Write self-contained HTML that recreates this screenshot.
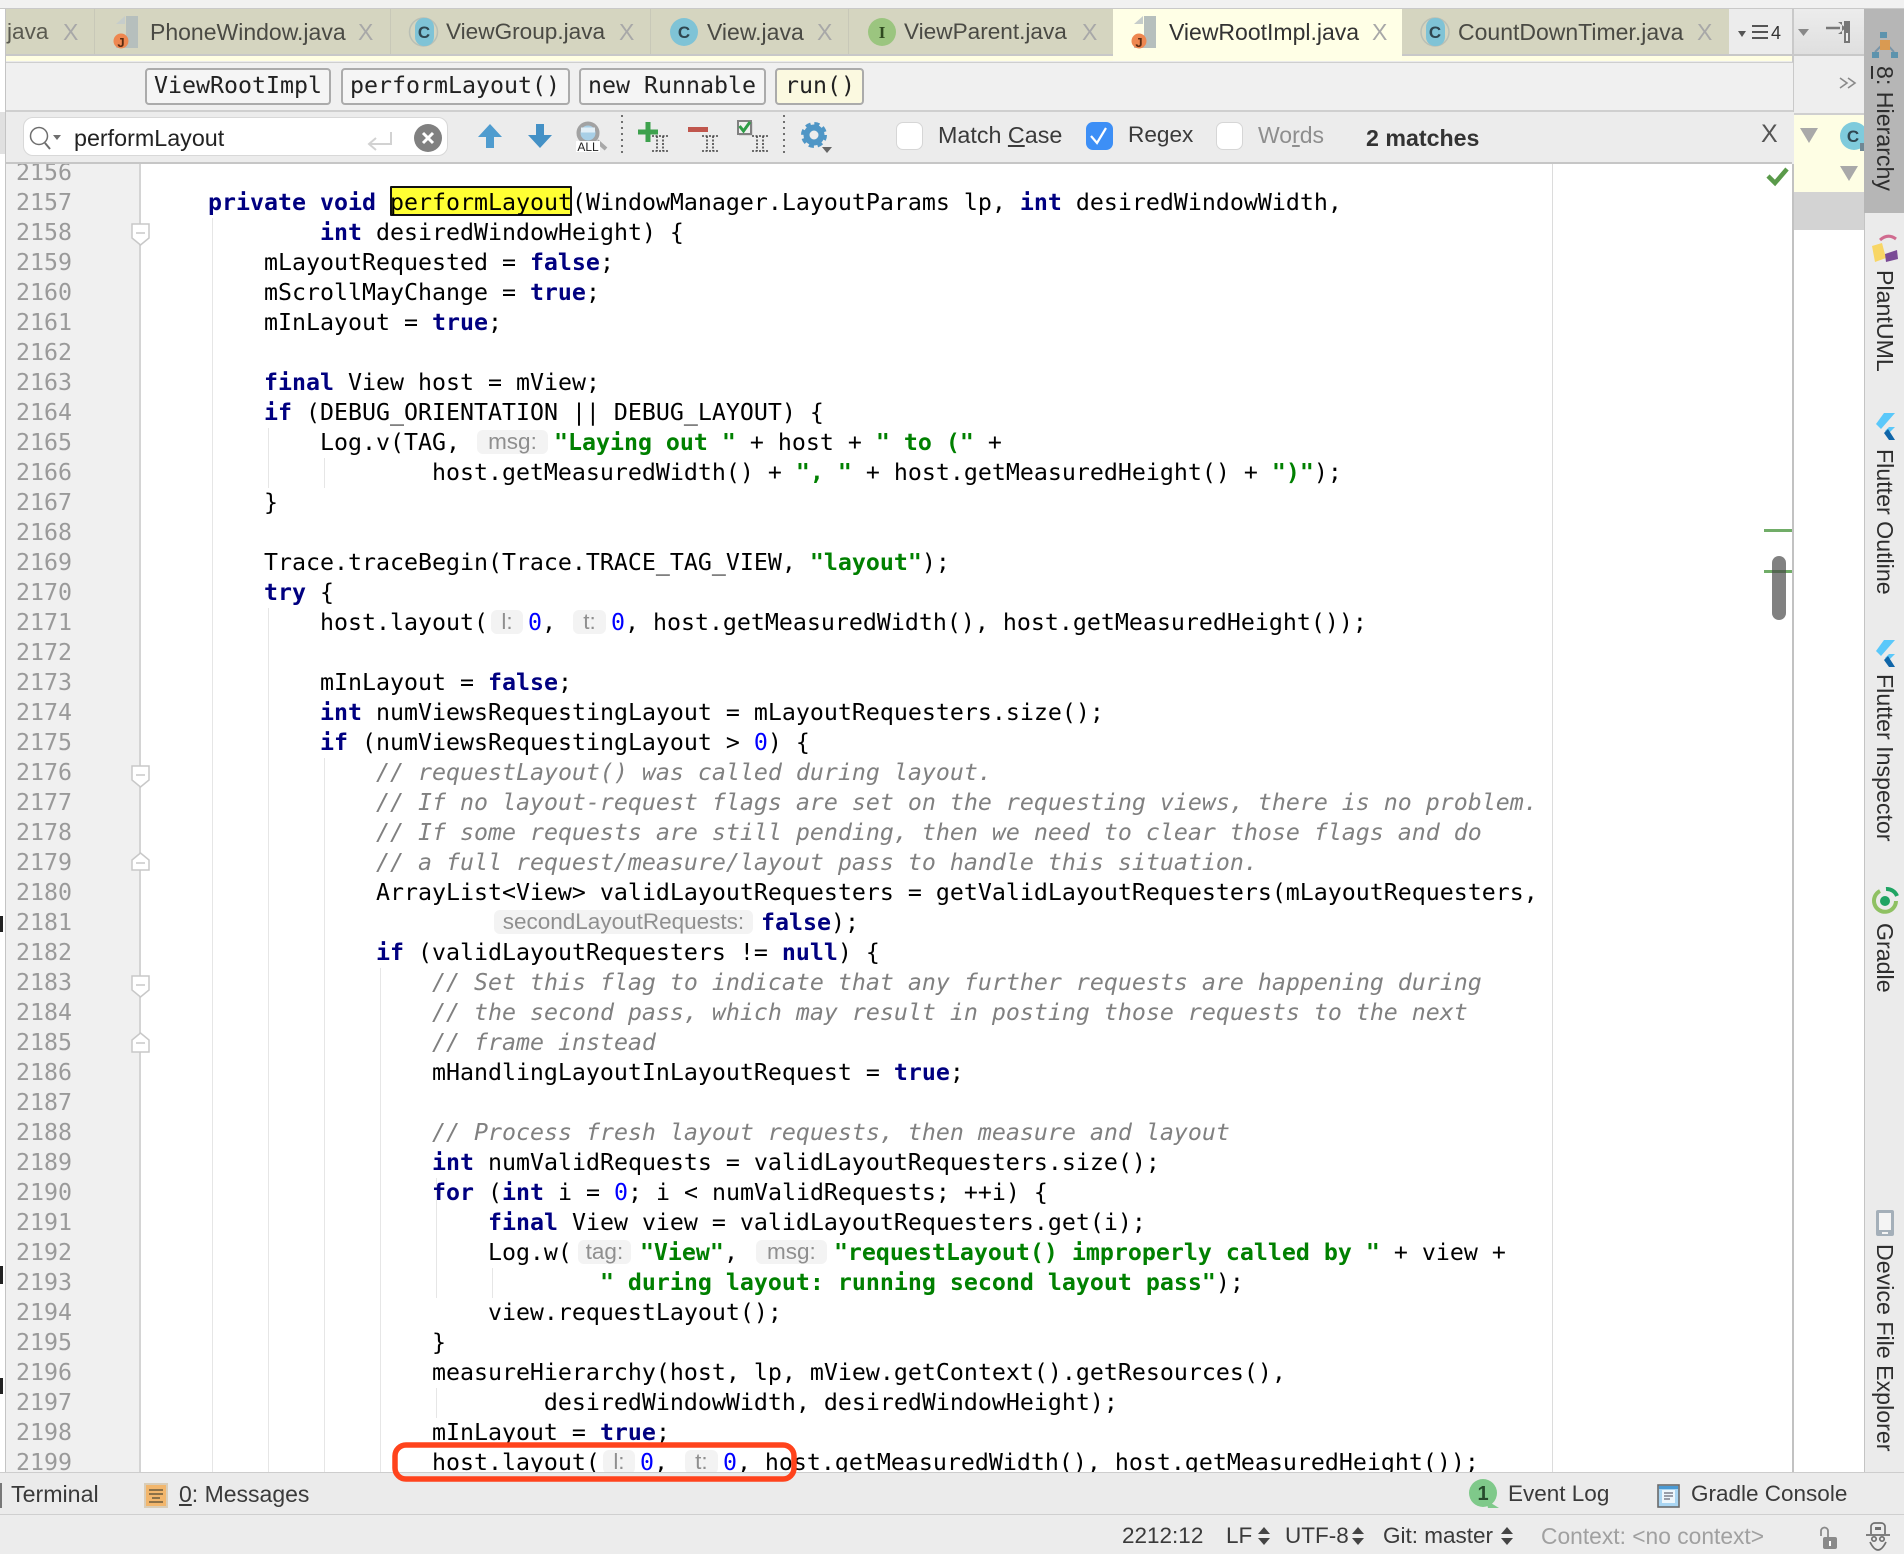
<!DOCTYPE html>
<html>
<head>
<meta charset="utf-8">
<style>
html,body{margin:0;padding:0;width:1904px;height:1554px;overflow:hidden;background:#ebebeb}
.r{position:absolute}
.t{position:absolute;white-space:pre;font:23px/28px "Liberation Sans",sans-serif;color:#3a3a3a}
.x{position:absolute;white-space:pre;font:23px/28px "Liberation Sans",sans-serif;color:#a8a8a8}
.m{position:absolute;white-space:pre;font:23.25px/30px "DejaVu Sans Mono",monospace;color:#000}
.v{position:absolute;left:1870px;width:30px;writing-mode:vertical-rl;white-space:pre;font:23.2px/30px "Liberation Sans",sans-serif;color:#2e2e2e}
.tab{position:absolute;top:9px;height:45px;background:#d5d5c0;border-right:1px solid #c8c8b8;box-sizing:border-box}
.bc{position:absolute;top:68px;height:37px;box-sizing:border-box;border:2px solid #ababab;border-radius:4px;background:#f5f5f5}
.cb{position:absolute;top:122px;width:27px;height:28px;box-sizing:border-box;border-radius:7px;background:#fff;border:1px solid #d6d6d6}
#ed{position:absolute;left:6px;top:164px;width:1786px;height:1308px;overflow:hidden;background:#fff}
#gut{position:absolute;left:0;top:0;width:133px;height:1308px;background:#f0f0f0;border-right:2px solid #d4d4d4}
.g{position:absolute;width:1px;background:#e6e6e6}
.l{position:absolute;left:146px;height:30px;white-space:pre;font:23.25px/30px "DejaVu Sans Mono",monospace;color:#000}
.n{position:absolute;left:10px;height:30px;white-space:pre;font:23.25px/30px "DejaVu Sans Mono",monospace;color:#9a9a9a}
b{color:#000080;font-weight:bold}
em{color:#808080;font-style:italic}
u.s{color:#008000;font-weight:bold;text-decoration:none}
u.d{color:#0000ff;text-decoration:none}
i{display:inline-block;height:24px;vertical-align:1.5px;background:#f3f3f3;border-radius:6px;font:normal 22.5px/24px "Liberation Sans",sans-serif;color:#8f8f8f;text-align:center}
</style>
</head>
<body>
<!-- chrome backgrounds -->
<div class="r" style="left:0;top:0;width:1904px;height:8px;background:#f1f1f1"></div>
<div class="r" style="left:0;top:8px;width:1904px;height:1px;background:#c9c9c9"></div>
<div class="r" style="left:0;top:9px;width:5px;height:1464px;background:#fff"></div>
<div class="r" style="left:5px;top:9px;width:1px;height:1464px;background:#c4c4c4"></div>
<div class="r" style="left:0;top:112px;width:5px;height:42px;background:#e0e0e0"></div>

<!-- tabs -->
<div class="tab" style="left:6px;width:89px"></div>
<div class="tab" style="left:95px;width:296px"></div>
<div class="tab" style="left:391px;width:260px"></div>
<div class="tab" style="left:651px;width:198px"></div>
<div class="tab" style="left:849px;width:265px"></div>
<div class="tab" style="left:1402px;width:327px;border-right:0"></div>
<div class="r" style="left:1729px;top:9px;width:64px;height:45px;background:#ececec"></div>
<div class="r" style="left:6px;top:54px;width:1787px;height:2px;background:#c8c8c8"></div>
<div class="r" style="left:6px;top:56px;width:1787px;height:5px;background:#fffee2"></div>
<div class="r" style="left:1113px;top:9px;width:289px;height:52px;background:#ffffe6"></div>
<div class="r" style="left:1793px;top:9px;width:71px;height:45px;background:linear-gradient(#ececec,#dfdfdf)"></div>
<div class="r" style="left:1793px;top:54px;width:71px;height:2px;background:#c8c8c8"></div>
<div class="r" style="left:1792px;top:9px;width:2px;height:105px;background:#c9c9c9"></div>

<div class="t" style="left:7px;top:18px;color:#5a5a50;font-size:22.6px">java</div>
<div class="x" style="left:63px;top:18px">X</div>
<div class="t" style="left:150px;top:18px;color:#4a4a44">PhoneWindow.java</div>
<div class="x" style="left:358px;top:18px">X</div>
<div class="t" style="left:446px;top:18px;color:#4a4a44;font-size:22.6px">ViewGroup.java</div>
<div class="x" style="left:619px;top:18px">X</div>
<div class="t" style="left:707px;top:18px;color:#4a4a44">View.java</div>
<div class="x" style="left:817px;top:18px">X</div>
<div class="t" style="left:904px;top:18px;color:#4a4a44;font-size:22.6px">ViewParent.java</div>
<div class="x" style="left:1082px;top:18px">X</div>
<div class="t" style="left:1169px;top:18px;color:#333">ViewRootImpl.java</div>
<div class="x" style="left:1372px;top:18px">X</div>
<div class="t" style="left:1458px;top:18px;color:#4a4a44">CountDownTimer.java</div>
<div class="x" style="left:1697px;top:18px">X</div>
<div class="t" style="left:1771px;top:19px;font-size:18px;color:#333">4</div>

<!-- breadcrumb row -->
<div class="r" style="left:6px;top:62px;width:1787px;height:1px;background:#cfcfcf"></div>
<div class="r" style="left:6px;top:63px;width:1787px;height:47px;background:#f0f0f0"></div>
<div class="r" style="left:1794px;top:56px;width:70px;height:57px;background:#eeeeee"></div>
<div class="r" style="left:1794px;top:113px;width:70px;height:2px;background:#cfcfcf"></div>
<div class="bc" style="left:145px;width:186px"></div>
<div class="bc" style="left:341px;width:229px"></div>
<div class="bc" style="left:579px;width:187px"></div>
<div class="bc" style="left:775px;width:89px;background:#fbf9e0"></div>
<div class="m" style="left:154px;top:71px;color:#222">ViewRootImpl</div>
<div class="m" style="left:350px;top:71px;color:#222">performLayout()</div>
<div class="m" style="left:588px;top:71px;color:#222">new Runnable</div>
<div class="m" style="left:785px;top:71px;color:#222">run()</div>

<!-- search row -->
<div class="r" style="left:6px;top:110px;width:1787px;height:2px;background:#cfcfcf"></div>
<div class="r" style="left:6px;top:112px;width:1787px;height:50px;background:#ececec"></div>
<div class="r" style="left:6px;top:162px;width:1787px;height:2px;background:#c6c6c6"></div>
<div class="r" style="left:23px;top:117px;width:425px;height:39px;box-sizing:border-box;background:#fff;border:1px solid #d8d8d8;border-radius:10px"></div>
<div class="t" style="left:74px;top:124px;color:#222;font-size:23.3px">performLayout</div>
<div class="cb" style="left:896px"></div>
<div class="t" style="left:938px;top:121px;font-size:23.3px">Match <span style="text-decoration:underline">C</span>ase</div>
<div class="cb" style="left:1086px;background:#3d8ff6;border-color:#3d8ff6"></div>
<div class="t" style="left:1128px;top:121px;font-size:22.6px">Re<span style="text-decoration:underline">g</span>ex</div>
<div class="cb" style="left:1216px"></div>
<div class="t" style="left:1258px;top:121px;color:#8e8e8e">Wo<span style="text-decoration:underline">r</span>ds</div>
<div class="t" style="left:1366px;top:124px;font-weight:bold;color:#333;font-size:23.2px">2 matches</div>
<div class="t" style="left:1761px;top:120px;color:#555;font-size:25px">X</div>

<!-- editor -->
<div id="ed">
<div id="gut"></div>
<div class="r" style="left:1546px;top:0;width:1px;height:1308px;background:#dcdcdc"></div>
<div class="g" style="left:206px;top:54px;height:1254px"></div>
<div class="g" style="left:262px;top:264px;height:60px"></div>
<div class="g" style="left:262px;top:444px;height:864px"></div>
<div class="g" style="left:318px;top:294px;height:30px"></div>
<div class="g" style="left:318px;top:594px;height:714px"></div>
<div class="g" style="left:374px;top:804px;height:504px"></div>
<div class="g" style="left:430px;top:1014px;height:120px"></div>
<div class="g" style="left:430px;top:1224px;height:30px"></div>
<div class="g" style="left:486px;top:1104px;height:30px"></div>
<div class="r" style="left:384px;top:22px;width:182px;height:30px;box-sizing:border-box;background:#ffff33;border:2px solid #111;border-radius:1px"></div>

<div class="n" style="top:-6px">2156</div>
<div class="n" style="top:24px">2157</div>
<div class="n" style="top:54px">2158</div>
<div class="n" style="top:84px">2159</div>
<div class="n" style="top:114px">2160</div>
<div class="n" style="top:144px">2161</div>
<div class="n" style="top:174px">2162</div>
<div class="n" style="top:204px">2163</div>
<div class="n" style="top:234px">2164</div>
<div class="n" style="top:264px">2165</div>
<div class="n" style="top:294px">2166</div>
<div class="n" style="top:324px">2167</div>
<div class="n" style="top:354px">2168</div>
<div class="n" style="top:384px">2169</div>
<div class="n" style="top:414px">2170</div>
<div class="n" style="top:444px">2171</div>
<div class="n" style="top:474px">2172</div>
<div class="n" style="top:504px">2173</div>
<div class="n" style="top:534px">2174</div>
<div class="n" style="top:564px">2175</div>
<div class="n" style="top:594px">2176</div>
<div class="n" style="top:624px">2177</div>
<div class="n" style="top:654px">2178</div>
<div class="n" style="top:684px">2179</div>
<div class="n" style="top:714px">2180</div>
<div class="n" style="top:744px">2181</div>
<div class="n" style="top:774px">2182</div>
<div class="n" style="top:804px">2183</div>
<div class="n" style="top:834px">2184</div>
<div class="n" style="top:864px">2185</div>
<div class="n" style="top:894px">2186</div>
<div class="n" style="top:924px">2187</div>
<div class="n" style="top:954px">2188</div>
<div class="n" style="top:984px">2189</div>
<div class="n" style="top:1014px">2190</div>
<div class="n" style="top:1044px">2191</div>
<div class="n" style="top:1074px">2192</div>
<div class="n" style="top:1104px">2193</div>
<div class="n" style="top:1134px">2194</div>
<div class="n" style="top:1164px">2195</div>
<div class="n" style="top:1194px">2196</div>
<div class="n" style="top:1224px">2197</div>
<div class="n" style="top:1254px">2198</div>
<div class="n" style="top:1284px">2199</div>

<div class="l" style="top:24px">    <b>private</b> <b>void</b> performLayout(WindowManager.LayoutParams lp, <b>int</b> desiredWindowWidth,</div>
<div class="l" style="top:54px">            <b>int</b> desiredWindowHeight) {</div>
<div class="l" style="top:84px">        mLayoutRequested = <b>false</b>;</div>
<div class="l" style="top:114px">        mScrollMayChange = <b>true</b>;</div>
<div class="l" style="top:144px">        mInLayout = <b>true</b>;</div>
<div class="l" style="top:204px">        <b>final</b> View host = mView;</div>
<div class="l" style="top:234px">        <b>if</b> (DEBUG_ORIENTATION || DEBUG_LAYOUT) {</div>
<div class="l" style="top:264px">            Log.v(TAG, <i style="margin-left:3px;width:71px;margin-right:6px">msg:</i><u class="s">"Laying out "</u> + host + <u class="s">" to ("</u> +</div>
<div class="l" style="top:294px">                    host.getMeasuredWidth() + <u class="s">", "</u> + host.getMeasuredHeight() + <u class="s">")"</u>);</div>
<div class="l" style="top:324px">        }</div>
<div class="l" style="top:384px">        Trace.traceBegin(Trace.TRACE_TAG_VIEW, <u class="s">"layout"</u>);</div>
<div class="l" style="top:414px">        <b>try</b> {</div>
<div class="l" style="top:444px">            host.layout(<i style="margin-left:3px;width:32px;margin-right:5px">l:</i><u class="d">0</u>, <i style="margin-left:3px;width:33px;margin-right:5px">t:</i><u class="d">0</u>, host.getMeasuredWidth(), host.getMeasuredHeight());</div>
<div class="l" style="top:504px">            mInLayout = <b>false</b>;</div>
<div class="l" style="top:534px">            <b>int</b> numViewsRequestingLayout = mLayoutRequesters.size();</div>
<div class="l" style="top:564px">            <b>if</b> (numViewsRequestingLayout &gt; <u class="d">0</u>) {</div>
<div class="l" style="top:594px">                <em>// requestLayout() was called during layout.</em></div>
<div class="l" style="top:624px">                <em>// If no layout-request flags are set on the requesting views, there is no problem.</em></div>
<div class="l" style="top:654px">                <em>// If some requests are still pending, then we need to clear those flags and do</em></div>
<div class="l" style="top:684px">                <em>// a full request/measure/layout pass to handle this situation.</em></div>
<div class="l" style="top:714px">                ArrayList&lt;View&gt; validLayoutRequesters = getValidLayoutRequesters(mLayoutRequesters,</div>
<div class="l" style="top:744px">                        <i style="margin-left:6px;width:259px;margin-right:8px">secondLayoutRequests:</i><b>false</b>);</div>
<div class="l" style="top:774px">                <b>if</b> (validLayoutRequesters != <b>null</b>) {</div>
<div class="l" style="top:804px">                    <em>// Set this flag to indicate that any further requests are happening during</em></div>
<div class="l" style="top:834px">                    <em>// the second pass, which may result in posting those requests to the next</em></div>
<div class="l" style="top:864px">                    <em>// frame instead</em></div>
<div class="l" style="top:894px">                    mHandlingLayoutInLayoutRequest = <b>true</b>;</div>
<div class="l" style="top:954px">                    <em>// Process fresh layout requests, then measure and layout</em></div>
<div class="l" style="top:984px">                    <b>int</b> numValidRequests = validLayoutRequesters.size();</div>
<div class="l" style="top:1014px">                    <b>for</b> (<b>int</b> i = <u class="d">0</u>; i &lt; numValidRequests; ++i) {</div>
<div class="l" style="top:1044px">                        <b>final</b> View view = validLayoutRequesters.get(i);</div>
<div class="l" style="top:1074px">                        Log.w(<i style="margin-left:6px;width:53px;margin-right:9px">tag:</i><u class="s">"View"</u>, <i style="margin-left:4px;width:71px;margin-right:7px">msg:</i><u class="s">"requestLayout() improperly called by "</u> + view +</div>
<div class="l" style="top:1104px">                                <u class="s">" during layout: running second layout pass"</u>);</div>
<div class="l" style="top:1134px">                        view.requestLayout();</div>
<div class="l" style="top:1164px">                    }</div>
<div class="l" style="top:1194px">                    measureHierarchy(host, lp, mView.getContext().getResources(),</div>
<div class="l" style="top:1224px">                            desiredWindowWidth, desiredWindowHeight);</div>
<div class="l" style="top:1254px">                    mInLayout = <b>true</b>;</div>
<div class="l" style="top:1284px">                    host.layout(<i style="margin-left:3px;width:32px;margin-right:5px">l:</i><u class="d">0</u>, <i style="margin-left:3px;width:33px;margin-right:5px">t:</i><u class="d">0</u>, host.getMeasuredWidth(), host.getMeasuredHeight());</div>
</div>

<!-- right editor margin and panel -->
<div class="r" style="left:1792px;top:164px;width:2px;height:1308px;background:#c2c2c2"></div>
<div class="r" style="left:1794px;top:115px;width:70px;height:77px;background:#fefee4"></div>
<div class="r" style="left:1794px;top:192px;width:70px;height:38px;background:#d3d3d3"></div>
<div class="r" style="left:1794px;top:230px;width:70px;height:1242px;background:#fff"></div>
<div class="r" style="left:1792px;top:112px;width:2px;height:52px;background:#ececec"></div>
<div class="r" style="left:1864px;top:9px;width:40px;height:1464px;background:#ebebeb;border-left:1px solid #c4c4c4;box-sizing:border-box"></div>
<div class="r" style="left:1864px;top:9px;width:40px;height:204px;background:#b6b6b6"></div>
<div class="r" style="left:1764px;top:529px;width:28px;height:3px;background:#71ad68"></div>
<div class="r" style="left:1764px;top:570px;width:28px;height:3px;background:#71ad68"></div>
<div class="r" style="left:1772px;top:556px;width:14px;height:64px;border-radius:7px;background:rgba(70,70,70,.68)"></div>

<!-- vertical tool windows -->
<div class="v" style="top:66px"><span style="text-decoration:underline">8</span>: Hierarchy</div>
<div class="v" style="top:270px">PlantUML</div>
<div class="v" style="top:449px">Flutter Outline</div>
<div class="v" style="top:674px">Flutter Inspector</div>
<div class="v" style="top:923px">Gradle</div>
<div class="v" style="top:1244px">Device File Explorer</div>

<!-- bottom bars -->
<div class="r" style="left:0;top:1472px;width:1904px;height:1px;background:#cdcdcd"></div>
<div class="r" style="left:0;top:1473px;width:1904px;height:41px;background:#ebebeb"></div>
<div class="r" style="left:0;top:1514px;width:1904px;height:1px;background:#cfcfcf"></div>
<div class="r" style="left:0;top:1515px;width:1904px;height:39px;background:#ececec"></div>
<div class="r" style="left:0;top:1483px;width:2px;height:25px;background:#777"></div>
<div class="t" style="left:11px;top:1480px;font-size:23.2px">Terminal</div>
<div class="t" style="left:179px;top:1480px;font-size:23px"><span style="text-decoration:underline">0</span>: Messages</div>
<div class="t" style="left:1508px;top:1480px;font-size:22.5px">Event Log</div>
<div class="t" style="left:1691px;top:1480px;font-size:22.5px">Gradle Console</div>
<div class="t" style="left:1122px;top:1522px;font-size:22.5px">2212:12</div>
<div class="t" style="left:1226px;top:1522px;font-size:22.5px">LF</div>
<div class="t" style="left:1285px;top:1522px;font-size:22.5px">UTF-8</div>
<div class="t" style="left:1383px;top:1522px;font-size:22.5px">Git: master</div>
<div class="t" style="left:1541px;top:1522px;font-size:22.8px;color:#a0a0a0">Context: &lt;no context&gt;</div>

<!-- icon layer -->
<svg class="r" style="left:0;top:0" width="1904" height="1554" viewBox="0 0 1904 1554" font-family="'Liberation Sans',sans-serif">
<!-- file J icons -->
<rect x="126" y="16" width="12" height="32" fill="#b6bfbd"/><polygon points="116,24 125,24 125,16" fill="#c6cdcb"/><rect x="116" y="38" width="12" height="10" fill="#b6bfbd"/><circle cx="121" cy="41" r="7.5" fill="#ee8750"/><text x="121" y="47" font-size="13" text-anchor="middle" font-weight="bold" fill="#5a2a10">J</text>
<rect x="1144" y="16" width="12" height="32" fill="#b6bfbd"/><polygon points="1134,24 1143,24 1143,16" fill="#c6cdcb"/><rect x="1134" y="38" width="12" height="10" fill="#b6bfbd"/><circle cx="1139" cy="41" r="7.5" fill="#ee8750"/><text x="1139" y="47" font-size="13" text-anchor="middle" font-weight="bold" fill="#5a2a10">J</text>
<!-- class icons -->
<circle cx="423.5" cy="32" r="14" fill="none" stroke="#b9bfb5" stroke-width="1.5"/><rect x="415" y="18" width="19" height="28" rx="9" fill="#7fc3d6"/><text x="424" y="38" font-size="17" text-anchor="middle" font-weight="bold" fill="#2f4650">C</text>
<circle cx="684" cy="32" r="14" fill="#7fc3d6"/><text x="684" y="38" font-size="17" text-anchor="middle" font-weight="bold" fill="#2f4650">C</text>
<circle cx="882" cy="32" r="14" fill="#9bc57f"/><text x="882" y="38" font-size="17" text-anchor="middle" font-family="'Liberation Serif',serif" font-weight="bold" fill="#2f4a20">I</text>
<circle cx="1435" cy="32" r="14" fill="none" stroke="#b9bfb5" stroke-width="1.5"/><rect x="1426" y="18" width="19" height="28" rx="9" fill="#7fc3d6"/><text x="1435" y="38" font-size="17" text-anchor="middle" font-weight="bold" fill="#2f4650">C</text>
<!-- tab menu -->
<polygon points="1738,31 1746,31 1742,37" fill="#555"/><path d="M1752,26H1768M1752,32H1768M1752,38H1768" stroke="#555" stroke-width="2"/>
<polygon points="1798,29 1809,29 1803.5,36" fill="#888"/>
<path d="M1826,28H1840" stroke="#777" stroke-width="2.5"/><polygon points="1838,22 1842,22 1842,34 1838,34 1846,28" fill="#777"/>
<rect x="1844" y="21" width="6" height="22" fill="#777"/><rect x="1846" y="33" width="2" height="8" fill="#eee"/>
<path d="M1840,78l7,5-7,5M1848,78l7,5-7,5" fill="none" stroke="#8a8a8a" stroke-width="1.6"/>
<!-- right panel -->
<polygon points="1800,128 1818,128 1809,143" fill="#a9a9a9"/>
<polygon points="1840,166 1858,166 1849,181" fill="#a9a9a9"/>
<clipPath id="pc"><rect x="1794" y="115" width="70" height="77"/></clipPath>
<g clip-path="url(#pc)"><circle cx="1854" cy="136" r="14" fill="#7fcbdc"/><text x="1853" y="142" font-size="17" text-anchor="middle" font-weight="bold" fill="#2f4650">C</text><rect x="1860" y="143" width="4" height="8" fill="#6f8794"/></g>
<!-- search icons -->
<circle cx="39" cy="136" r="8.5" fill="none" stroke="#6e6e6e" stroke-width="1.5"/><path d="M45,143L50,149" stroke="#6e6e6e" stroke-width="2"/><polygon points="53,135 61,135 57,140" fill="#6e6e6e"/>
<path d="M391,132V144H370M376,138L369,144L376,150" fill="none" stroke="#d2d2d2" stroke-width="2"/>
<circle cx="428" cy="138" r="14" fill="#808080"/><path d="M423,133L433,143M433,133L423,143" stroke="#fff" stroke-width="3"/>
<polygon points="490,124 502,137 494,137 494,148 486,148 486,137 478,137" fill="#4f9ccf"/>
<polygon points="540,148 552,135 544,135 544,124 536,124 536,135 528,135" fill="#4491c6"/>
<path d="M597,141L606,149" stroke="#a8a8a8" stroke-width="4"/><circle cx="588" cy="133" r="9.5" fill="#a8cfe6" stroke="#a2a2a2" stroke-width="4"/><path d="M581,130H595" stroke="#e2eff7" stroke-width="5"/><rect x="576" y="141" width="24" height="11" fill="#fff"/><text x="588" y="151" font-size="12" text-anchor="middle" fill="#222">ALL</text>
<path d="M622,115V153M784,115V153" stroke="#707070" stroke-width="2" stroke-dasharray="2 4"/>
<path d="M638,132H658M648,122V142" stroke="#3da14d" stroke-width="5"/>
<path d="M652,136H668M652,151H668M657,136V151M663,136V151" stroke="#444" stroke-width="1.6" stroke-dasharray="2 1.5" fill="none"/>
<rect x="688" y="127" width="20" height="5" fill="#c0564d"/>
<path d="M702,136H718M702,151H718M707,136V151M713,136V151" stroke="#444" stroke-width="1.6" stroke-dasharray="2 1.5" fill="none"/>
<rect x="739" y="122" width="14" height="14" fill="#d8d8d8"/><rect x="738" y="121" width="13" height="13" fill="#f0f0f0" stroke="#808080" stroke-width="2"/><path d="M739.5,126L743.5,131L750,122" fill="none" stroke="#2f9d47" stroke-width="3"/>
<path d="M752,136H768M752,151H768M757,136V151M763,136V151" stroke="#444" stroke-width="1.6" stroke-dasharray="2 1.5" fill="none"/>
<circle cx="814" cy="135" r="7.5" fill="none" stroke="#4f96c6" stroke-width="6"/><circle cx="814" cy="135" r="11" fill="none" stroke="#4f96c6" stroke-width="4" stroke-dasharray="5 3.64"/><polygon points="822,147 832,147 827,153" fill="#666"/>
<path d="M1091,136L1097,143L1106,128" fill="none" stroke="#fff" stroke-width="2.2"/>
<path d="M1768,176L1775,183L1787,169" fill="none" stroke="#5a9a4a" stroke-width="4.5"/>
<!-- fold markers -->
<g fill="#fff" stroke="#c8c8c8" stroke-width="1.5">
<path d="M132,224H149V238L140.5,245L132,238Z"/><path d="M132,766H149V780L140.5,787L132,780Z"/><path d="M132,976H149V990L140.5,997L132,990Z"/>
<path d="M132,860L140.5,853L149,860V870H132Z"/><path d="M132,1040L140.5,1033L149,1040V1052H132Z"/>
</g>
<path d="M136,233H145M136,775H145M136,985H145M136,863H145M136,1043H145" stroke="#c8c8c8" stroke-width="1.5"/>
<!-- left edge marks -->
<path d="M0,916H3V932H0ZM0,1266H3V1284H0ZM0,1378H3V1394H0Z" fill="#222"/>
<!-- strip icons -->
<path d="M1885,42L1875,52M1885,42L1894,52" stroke="#7a95a8" stroke-width="2"/><rect x="1880" y="32" width="7" height="6" fill="#5d93ad"/><rect x="1880" y="40" width="10" height="10" fill="#d99a52"/><rect x="1872" y="52" width="7" height="6" fill="#5d93ad"/><rect x="1891" y="52" width="7" height="6" fill="#5d93ad"/>
<polygon points="1872,246 1882,243 1886,258 1875,262" fill="#f8d665"/><path d="M1880,240Q1888,233 1896,239" fill="none" stroke="#d06b8f" stroke-width="3"/><polygon points="1885,254 1897,250 1898,259 1886,262" fill="#7a4b96"/>
<polygon points="1884,413 1895,413 1881,429 1876,424" fill="#5ac8fa"/><polygon points="1889,427 1895,427 1888,434 1885,431" fill="#5ac8fa"/><polygon points="1884,433 1888,429 1895,440 1889,440" fill="#0f65a8"/>
<polygon points="1884,640 1895,640 1881,656 1876,651" fill="#5ac8fa"/><polygon points="1889,654 1895,654 1888,661 1885,658" fill="#5ac8fa"/><polygon points="1884,660 1888,656 1895,667 1889,667" fill="#0f65a8"/>
<path d="M1880,891A11,11 0 1 0 1896,901" fill="none" stroke="#8fc163" stroke-width="4"/><path d="M1886,889A11,11 0 0 1 1897,896" fill="none" stroke="#1fa463" stroke-width="4"/><circle cx="1885" cy="901" r="5" fill="#1fa463"/>
<rect x="1876" y="1210" width="18" height="26" rx="2" fill="#a4afb9"/><rect x="1879" y="1213" width="12" height="17" fill="#f4f4f4"/><rect x="1882" y="1232" width="6" height="2" fill="#f4f4f4"/>
<!-- bottom icons -->
<rect x="145" y="1484" width="22" height="23" fill="#f2b66c" stroke="#d9cdb8" stroke-width="2"/><path d="M149,1490H163M149,1494H163M152,1498H160M149,1502H163" stroke="#6b5a3c" stroke-width="1.5"/>
<circle cx="1483" cy="1493" r="14" fill="#7fc98a"/><polygon points="1486,1500 1499,1508 1488,1508" fill="#7fc98a"/><text x="1483" y="1500" font-size="20" text-anchor="middle" font-weight="bold" fill="#264a2c">1</text>
<rect x="1658" y="1485" width="21" height="22" fill="#a9d5f2" stroke="#6a6a6a" stroke-width="1.6"/><rect x="1662" y="1490" width="13" height="13" fill="#eef6fb"/><path d="M1664,1493H1673M1664,1496H1673M1664,1499H1670" stroke="#445" stroke-width="1"/><rect x="1659" y="1486" width="19" height="3" fill="#4a9ad4"/>
<g fill="#444"><polygon points="1258,1534 1264,1527 1270,1534"/><polygon points="1258,1538 1270,1538 1264,1545"/><polygon points="1352,1534 1358,1527 1364,1534"/><polygon points="1352,1538 1364,1538 1358,1545"/><polygon points="1501,1534 1507,1527 1513,1534"/><polygon points="1501,1538 1513,1538 1507,1545"/></g>
<path d="M1821,1536V1531A3.5,3.5 0 0 1 1828,1531V1537" fill="none" stroke="#8a8a8a" stroke-width="1.8"/><rect x="1823" y="1537" width="14" height="12" rx="2" fill="#8a8a8a"/><rect x="1829" y="1541" width="2" height="5" fill="#fff"/>
<g fill="none" stroke="#707070" stroke-width="1.7"><path d="M1871,1534V1526A4,4 0 0 1 1875,1523H1881A4,4 0 0 1 1885,1526V1534"/><path d="M1866,1535H1890"/><circle cx="1874" cy="1539" r="2.2"/><circle cx="1882" cy="1539" r="2.2"/><path d="M1870,1542Q1878,1558 1886,1542"/></g><rect x="1875" y="1527" width="6" height="3" fill="#707070"/>
<!-- red annotation -->
<rect x="395" y="1445" width="399" height="34" rx="11" fill="none" stroke="#ff431c" stroke-width="5.5"/>
</svg>
</body>
</html>
